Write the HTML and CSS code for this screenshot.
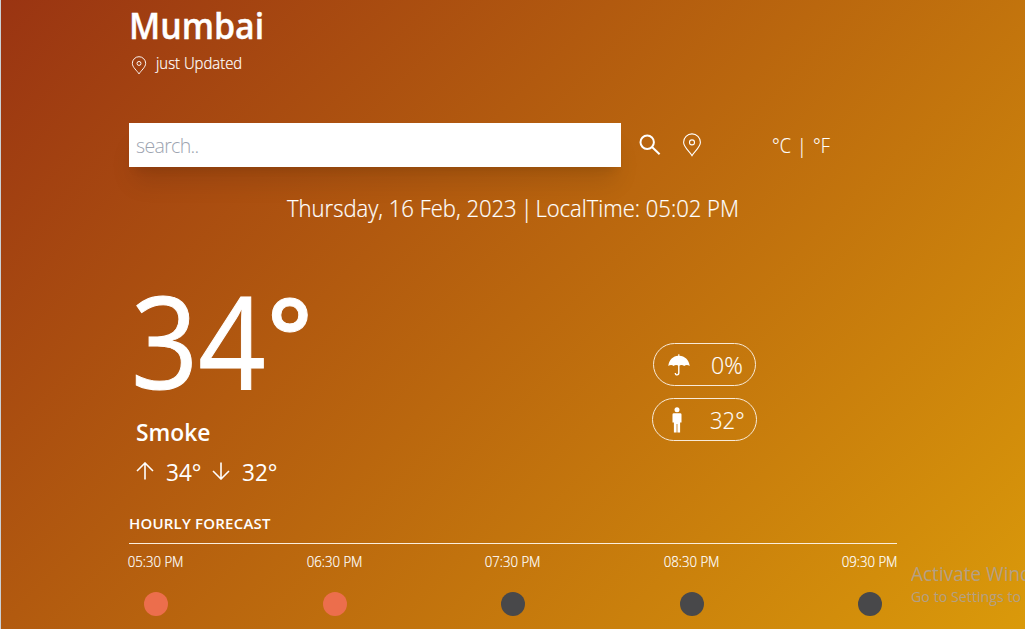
FILE: index.html
```html
<!DOCTYPE html>
<html lang="en">
<head>
<meta charset="utf-8">
<title>Weather</title>
<link rel="stylesheet" href="styles.css">
</head>
<body>
<main class="app">
  <div class="content">
    <h1 class="city">Mumbai</h1>
    <div class="updated">
      <svg class="pin-small" viewBox="0 0 20 24"><path d="M10 22.6C7.6 18.6 1.6 14.2 1.6 9.3a8.4 8.4 0 0 1 16.8 0C18.4 14.2 12.4 18.6 10 22.6Z"/><circle cx="10" cy="9.4" r="2.5"/></svg>
      <span>just Updated</span>
    </div>
    <form class="search-row">
      <input class="search" type="text" placeholder="search..">
      <svg class="glass" viewBox="0 0 22 22"><circle cx="8.2" cy="8.2" r="6.7"/><path d="M13 13l7.6 7.3"/></svg>
      <svg class="pin" viewBox="0 0 20 24"><path d="M10 22.6C7.6 18.6 1.6 14.2 1.6 9.3a8.4 8.4 0 0 1 16.8 0C18.4 14.2 12.4 18.6 10 22.6Z"/><circle cx="10" cy="9.4" r="2.5"/></svg>
      <div class="units"><span>°C</span><span class="bar">|</span><span>°F</span></div>
    </form>
    <p class="date">Thursday, 16 Feb, 2023<span class="divider"> | </span>LocalTime: 05:02 PM</p>
    <section class="now">
      <div class="reading">
        <div class="temp">34<span class="degree">°</span></div>
        <div class="condition">Smoke</div>
        <div class="range">
          <svg class="arrow" viewBox="0 0 18 18"><path d="M9 17.5V1M1 9l8-8 8 8"/></svg><span>34°</span>
          <svg class="arrow" viewBox="0 0 18 18"><path d="M9 .5V17M1 9l8 8 8-8"/></svg><span>32°</span>
        </div>
      </div>
      <div class="details">
        <div class="pill rain">
          <svg class="umbrella" viewBox="0 0 22 22"><path class="fill" d="M.3 12C1 5.500 5.300 2 10.200 1.700V.3h1.200V1.700C16.500 2 21 5.500 21.700 12 20 10.600 17.700 10.600 16.200 12 14.700 10.700 12.500 10.600 10.800 12 9.200 10.600 7 10.600 5.600 12 4.200 10.600 2 10.600.3 12Z"/><path class="line" d="M10.800 11v7.800c0 2.700-3.500 2.700-3.500.2"/></svg>
          <span>0%</span>
        </div>
        <div class="pill feels">
          <svg class="person" viewBox="0 0 10 26"><circle cx="5" cy="2.800" r="2.500"/><path d="M1.800 6.300h6.400q1.300 0 1.300 1.300v8H8.100V25.500H5.400V17h-.8v8.500H1.900V15.600H.5v-8q0-1.300 1.300-1.300Z"/></svg>
          <span>32°</span>
        </div>
      </div>
    </section>
    <h2 class="forecast-title"><span>HOURLY FORECAST</span></h2>
    <div class="hours">
      <div class="hour"><span>05:30 PM</span><i class="sun"></i></div>
      <div class="hour"><span>06:30 PM</span><i class="sun"></i></div>
      <div class="hour"><span>07:30 PM</span><i class="cloud"></i></div>
      <div class="hour"><span>08:30 PM</span><i class="cloud"></i></div>
      <div class="hour"><span>09:30 PM</span><i class="cloud"></i></div>
    </div>
  </div>
  <aside class="watermark"><div class="wm-title">Activate Windows</div><div class="wm-text">Go to Settings to activate Windows.</div></aside>
</main>
</body>
</html>
```
FILE: styles.css
```css
* { box-sizing: border-box; margin: 0; padding: 0; }
html, body { height: 629px; overflow: hidden; }
body { font-family: "Open Sans", "Noto Sans", sans-serif; font-weight: 300; color: #fff; }
.app {
  position: relative; height: 629px; overflow: hidden;
  border-left: 1px solid #cbd0d5;
  background: linear-gradient(to bottom right, #9a3412, #eab308) 0 0 / 1024px 1048px no-repeat;
}
.content { width: 768px; margin: 0 128px; }
svg { flex: none; fill: none; stroke: #fff; display: block; }
.city, .temp, .condition, .updated span, .range span, .pill span, .units span { transform-origin: 0 50%; }
.city { height: 50px; line-height: 51px; font-size: 36px; font-weight: 600; -webkit-text-stroke: .4px #fff; transform: scaleX(.94); }
.updated { display: flex; height: 27px; line-height: 27px; font-size: 16px; }
.updated span { transform: scaleX(.93); -webkit-text-stroke: .2px #fff; }
.pin-small { width: 16px; height: 19px; margin: 6px 9px 0 2px; stroke-width: 1.2; }
.search-row { display: flex; align-items: center; height: 44px; margin-top: 46px; }
.search {
  width: 492px; height: 44px; padding: 1px 8px 0 7px; border: 0; background: #fff;
  font: inherit; font-size: 19.5px; letter-spacing: -.65px;
  box-shadow: 0 20px 25px -5px rgba(0,0,0,.1), 0 8px 10px -6px rgba(0,0,0,.1);
}
.search::placeholder { color: #9ca3af; opacity: 1; }
.glass { width: 22px; height: 22px; margin-left: 18px; stroke-width: 2; }
.pin { width: 20px; height: 24px; margin-left: 21px; stroke-width: 1.1; }
.units { display: flex; margin-left: 70px; font-size: 20px; line-height: 44px; padding-top: 2px; }
.units span { transform: scaleX(.9); -webkit-text-stroke: .15px #fff; }
.units .bar { margin: 0 5px 0 4px; }
.date { height: 36px; line-height: 34px; margin-top: 24px; font-size: 24px; text-align: center; -webkit-text-stroke: .2px #fff; transform: scaleX(.918); }
.divider { letter-spacing: -1.7px; }
.now { display: flex; justify-content: space-between; height: 263px; margin-top: 21px; }
.reading { padding: 28px 0 0 7px; }
.temp { height: 128px; line-height: 127px; margin-left: -5px; font-size: 128px; font-weight: 400; -webkit-text-stroke: 1px #fff; transform: scaleX(.92); }
.degree { display: inline-block; font-size: 106px; font-weight: 600; line-height: 1; vertical-align: 14px; margin-left: 2px; transform: scaleX(1.08); transform-origin: 0 50%; }
.condition { height: 40px; line-height: 40px; margin-top: 8px; font-size: 24px; font-weight: 600; transform: scaleX(.95); }
.range { display: flex; align-items: center; height: 38px; font-size: 24px; font-weight: 400; }
.range span { transform: scaleX(.94); }
.arrow { width: 18px; height: 18px; stroke-width: 1.6; margin-right: 12px; }
.range span + .arrow { margin-left: 8px; }
.details { display: flex; flex-direction: column; align-items: center; gap: 12px; width: 105px; margin: 95px 140px 0 0; }
.pill { display: flex; align-items: center; height: 43px; border: 1px solid #f8ead8; border-radius: 22px; font-size: 24px; }
.pill span { transform: scaleX(.92); -webkit-text-stroke: .15px #fff; }
.pill.rain span { transform: scaleX(.96); }
.rain { width: 103px; padding-left: 14px; }
.feels { width: 105px; padding-left: 19px; }
.umbrella { width: 22px; height: 22px; margin-right: 21px; }
.fill, .person { fill: #fff; stroke: none; }
.line { stroke-width: 1.4; }
.person { width: 10px; height: 26px; margin-right: 28px; }
.forecast-title { height: 33px; line-height: 24px; border-bottom: 1px solid #fbeedd; font-size: 15px; font-weight: 600; letter-spacing: .2px; }
.hours { display: flex; justify-content: space-between; margin-right: -.5px; margin-left: -.5px; }
.hour { display: flex; flex-direction: column; align-items: center; width: 55px; white-space: nowrap; font-size: 14px; line-height: 36px; }
.hour span { transform: scaleX(.94); -webkit-text-stroke: .2px #fff; }
.hour i { width: 24px; height: 24px; border-radius: 50%; margin-top: 12px; }
.sun { background: #ec6e4c; }
.cloud { background: #48484a; }
.watermark { position: absolute; left: 910px; top: 560px; white-space: nowrap; color: #b3a085; font-weight: 400; transform-origin: 0 0; transform: scaleX(.95); }
.wm-title { font-size: 20px; line-height: 28px; }
.wm-text { font-size: 15px; line-height: 17px; }
```
